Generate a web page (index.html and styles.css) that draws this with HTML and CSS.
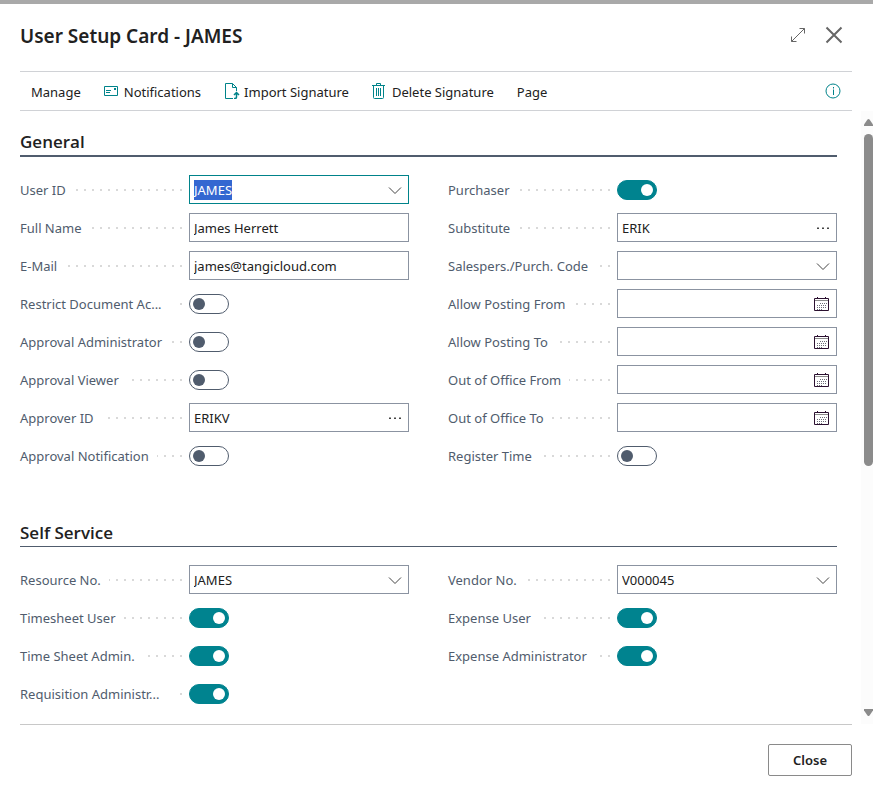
FILE: index.html
```html
<!DOCTYPE html>
<html lang="en">
<head>
<meta charset="utf-8">
<meta name="viewport" content="width=device-width, initial-scale=1">
<title>User Setup Card - JAMES</title>
<link rel="stylesheet" href="styles.css">
</head>
<body>
<svg class="sprite" aria-hidden="true">
  <symbol id="chevron" viewBox="0 0 16 17"><path d="M3 6.500 9 12.500 15 6.500" fill="none" stroke="#444"/></symbol>
  <symbol id="dots" viewBox="0 0 16 17"><path d="M3 8.500h2V10H3zM8 8.500h2V10H8zM13 8.500h2V10h-2z" fill="#444"/></symbol>
  <symbol id="calendar" viewBox="0 0 16 17">
    <path d="M.5 3.500h14v12H.5zM3.500 2v2M11.500 2v2" fill="none" stroke="#2b1030"/>
    <path d="M1 5.500h13" stroke="#8b8b8b"/>
    <path d="M6 8.500h7M3 10.500h10M3 12.500h10M3 14.500h6" fill="none" stroke="#6d6d78" stroke-dasharray="1 1"/>
  </symbol>
</svg>
<div class="dialog" role="dialog" aria-labelledby="title">
  <header class="header">
    <h1 class="title" id="title">User Setup Card - JAMES</h1>
    <div class="window-actions">
      <button class="icon-button" type="button" aria-label="Expand">
        <svg width="16" height="16" viewBox="0 0 16 16" fill="none" stroke="#666"><path d="M1.500 14.500l13-13M9.500 1.500h5v5M1.500 9.500v5h5"/></svg>
      </button>
      <button class="icon-button" type="button" aria-label="Close dialog">
        <svg width="18" height="18" viewBox="0 0 18 18" fill="none" stroke="#666" stroke-width="2"><path d="M1.500 1.500l15 15M16.500 1.500l-15 15"/></svg>
      </button>
    </div>
  </header>
  <nav class="toolbar" aria-label="Actions">
    <button class="action" type="button">Manage</button>
    <button class="action" type="button">
      <svg width="16" height="16" viewBox="0 0 16 16" fill="none" stroke="currentColor"><path d="M.5 3.500h13v9H.5zM2 7.500h5M2 9.500h4"/><path d="M10 5h2v2h-2z" fill="currentColor" stroke="none"/></svg>
      <span>Notifications</span>
    </button>
    <button class="action" type="button">
      <svg width="16" height="16" viewBox="0 0 16 16" fill="none" stroke="currentColor"><path d="M9 15.500H1.500V.5h7l4 4V8M8.500.5v4h4"/><path d="M10 15.500h1q1.500 0 1.500-1.500v-4M10 12l2.500-2.500L15 12" stroke-width="1.500"/></svg>
      <span>Import Signature</span>
    </button>
    <button class="action" type="button">
      <svg width="16" height="16" viewBox="0 0 16 16" fill="none" stroke="currentColor"><path d="M0 2.500h13M4.500 2V.5h4V2M1.500 3v11.500q0 1 1 1h8q1 0 1-1V3M4.500 5v8M6.500 5v8M8.500 5v8"/></svg>
      <span>Delete Signature</span>
    </button>
    <button class="action" type="button">Page</button>
    <button class="icon-button info" type="button" aria-label="Show details">
      <svg width="16" height="16" viewBox="0 0 16 16" fill="none" stroke="currentColor"><circle cx="8" cy="8" r="7"/><path d="M8.500 6.500V12M8.500 4v1.500"/></svg>
    </button>
  </nav>

  <div class="body">
    <main class="content">
      <section class="section">
        <h2 class="section-title section-title--strong">General</h2>
        <div class="columns">
          <div class="column">
            <div class="row"><div class="caption"><label for="user-id">User ID</label></div>
              <div class="field"><input id="user-id" type="text" value="JAMES"><button type="button" aria-label="Choose user"><svg width="16" height="17"><use href="#chevron"/></svg></button></div></div>
            <div class="row"><div class="caption"><label for="full-name">Full Name</label></div>
              <div class="field"><input id="full-name" type="text" value="James Herrett"></div></div>
            <div class="row"><div class="caption"><label for="email">E-Mail</label></div>
              <div class="field"><input id="email" type="email" value="james@tangicloud.com"></div></div>
            <div class="row"><div class="caption caption--clipped"><label for="restrict">Restrict Document Ac...</label></div>
              <input class="switch" id="restrict" type="checkbox" role="switch"></div>
            <div class="row"><div class="caption"><label for="approval-admin">Approval Administrator</label></div>
              <input class="switch" id="approval-admin" type="checkbox" role="switch"></div>
            <div class="row"><div class="caption"><label for="approval-viewer">Approval Viewer</label></div>
              <input class="switch" id="approval-viewer" type="checkbox" role="switch"></div>
            <div class="row"><div class="caption"><label for="approver">Approver ID</label></div>
              <div class="field"><input id="approver" type="text" value="ERIKV"><button type="button" aria-label="Look up approver"><svg width="16" height="17"><use href="#dots"/></svg></button></div></div>
            <div class="row"><div class="caption"><label for="approval-note">Approval Notification</label></div>
              <input class="switch" id="approval-note" type="checkbox" role="switch"></div>
          </div>
          <div class="column">
            <div class="row"><div class="caption"><label for="purchaser">Purchaser</label></div>
              <input class="switch" id="purchaser" type="checkbox" role="switch" checked></div>
            <div class="row"><div class="caption"><label for="substitute">Substitute</label></div>
              <div class="field"><input id="substitute" type="text" value="ERIK"><button type="button" aria-label="Look up substitute"><svg width="16" height="17"><use href="#dots"/></svg></button></div></div>
            <div class="row"><div class="caption"><label for="sales-code">Salespers./Purch. Code</label></div>
              <div class="field"><input id="sales-code" type="text"><button type="button" aria-label="Choose code"><svg width="16" height="17"><use href="#chevron"/></svg></button></div></div>
            <div class="row"><div class="caption"><label for="post-from">Allow Posting From</label></div>
              <div class="field"><input id="post-from" type="text"><button type="button" aria-label="Pick date"><svg width="16" height="17"><use href="#calendar"/></svg></button></div></div>
            <div class="row"><div class="caption"><label for="post-to">Allow Posting To</label></div>
              <div class="field"><input id="post-to" type="text"><button type="button" aria-label="Pick date"><svg width="16" height="17"><use href="#calendar"/></svg></button></div></div>
            <div class="row"><div class="caption"><label for="ooo-from">Out of Office From</label></div>
              <div class="field"><input id="ooo-from" type="text"><button type="button" aria-label="Pick date"><svg width="16" height="17"><use href="#calendar"/></svg></button></div></div>
            <div class="row"><div class="caption"><label for="ooo-to">Out of Office To</label></div>
              <div class="field"><input id="ooo-to" type="text"><button type="button" aria-label="Pick date"><svg width="16" height="17"><use href="#calendar"/></svg></button></div></div>
            <div class="row"><div class="caption"><label for="register-time">Register Time</label></div>
              <input class="switch" id="register-time" type="checkbox" role="switch"></div>
          </div>
        </div>
      </section>

      <section class="section">
        <h2 class="section-title">Self Service</h2>
        <div class="columns">
          <div class="column">
            <div class="row"><div class="caption"><label for="resource">Resource No.</label></div>
              <div class="field"><input id="resource" type="text" value="JAMES"><button type="button" aria-label="Choose resource"><svg width="16" height="17"><use href="#chevron"/></svg></button></div></div>
            <div class="row"><div class="caption"><label for="timesheet-user">Timesheet User</label></div>
              <input class="switch" id="timesheet-user" type="checkbox" role="switch" checked></div>
            <div class="row"><div class="caption"><label for="timesheet-admin">Time Sheet Admin.</label></div>
              <input class="switch" id="timesheet-admin" type="checkbox" role="switch" checked></div>
            <div class="row"><div class="caption caption--clipped"><label for="requisition">Requisition Administr...</label></div>
              <input class="switch" id="requisition" type="checkbox" role="switch" checked></div>
          </div>
          <div class="column">
            <div class="row"><div class="caption"><label for="vendor">Vendor No.</label></div>
              <div class="field"><input id="vendor" type="text" value="V000045"><button type="button" aria-label="Choose vendor"><svg width="16" height="17"><use href="#chevron"/></svg></button></div></div>
            <div class="row"><div class="caption"><label for="expense-user">Expense User</label></div>
              <input class="switch" id="expense-user" type="checkbox" role="switch" checked></div>
            <div class="row"><div class="caption"><label for="expense-admin">Expense Administrator</label></div>
              <input class="switch" id="expense-admin" type="checkbox" role="switch" checked></div>
          </div>
        </div>
      </section>
    </main>
    <div class="rail" aria-hidden="true">
      <svg width="9" height="7" viewBox="0 0 9 7"><path d="M3.500.5q1-1 2 0L9 5.500V7H0V5.500z" fill="#8b8b8b"/></svg>
      <div class="track"><div class="thumb"></div></div>
      <svg width="9" height="7" viewBox="0 0 9 7"><path d="M3.500 6.500q1 1 2 0L9 1.500V0H0v1.500z" fill="#8b8b8b"/></svg>
    </div>
  </div>

  <footer class="footer"><button class="close" type="button">Close</button></footer>
</div>
<script src="script.js"></script>
</body>
</html>
```
FILE: styles.css
```css
* { box-sizing: border-box; }

body {
  margin: 0;
  background: #fff;
  color: #212121;
  font: 13px/20px "Noto Sans", "Open Sans", sans-serif;
}

button, input { margin: 0; font: inherit; color: inherit; }

button {
  padding: 0;
  border: 0;
  background: none;
  cursor: pointer;
}

svg { display: block; flex: none; }

.sprite { position: absolute; width: 0; height: 0; }

.dialog {
  display: flex;
  flex-direction: column;
  min-height: 100vh;
  border-top: 4px solid #a9a9a9;
}

.header {
  display: flex;
  align-items: center;
  justify-content: space-between;
  height: 67px;
  padding: 0 30px 5px 20px;
}

.title { margin: 0; padding-top: 2px; font-size: 19px; font-weight: 600; line-height: 28px; }

.window-actions { display: flex; align-items: center; gap: 19px; }

.toolbar {
  display: flex;
  align-items: center;
  gap: 23px;
  height: 40px;
  margin: 0 21px 0 20px;
  padding: 2px 11px 0;
  border-top: 1px solid #d0d2d6;
  border-bottom: 1px solid #d0d2d6;
}

.action { display: flex; align-items: center; gap: 4px; white-space: nowrap; }
.action svg { margin-bottom: 2px; }
.action svg, .info { color: #00838a; }
.info { margin-left: auto; padding-bottom: 3px; }

.body { display: flex; flex: 1; gap: 24px; }

.content { flex: 1; padding-left: 20px; }

.section { padding-top: 18px; }
.section + .section { padding-top: 49px; }

.section-title {
  margin: 0 0 18px;
  padding-bottom: 1px;
  border-bottom: 1px solid #505c6d;
  font-family: "Open Sans", "Noto Sans", sans-serif;
  font-size: 17px;
  font-weight: 600;
  line-height: 25px;
}

.section-title--strong { border-bottom-width: 2px; }

.columns { display: grid; grid-template-columns: 1fr 1fr; gap: 39px; }

.column { display: flex; flex-direction: column; gap: 8px; }

.row {
  display: grid;
  grid-template-columns: 162fr 220fr;
  align-items: center;
  gap: 7px;
  height: 30px;
}

.caption { display: flex; align-items: center; color: #505c6d; white-space: nowrap; }

/* Dotted leader between the caption and its control */
.caption::after {
  content: "";
  flex: 1;
  height: 2px;
  margin-left: 8px;
  background: repeating-linear-gradient(to left, #d9d9d9 0 2px, transparent 2px 8px);
}

.caption--clipped label { flex: 1; }
.caption--clipped::after { flex: none; width: 2px; }

.field {
  display: flex;
  align-items: center;
  height: 29px;
  margin-bottom: 1px;
  padding: 0 6px 0 4px;
  border: 1px solid #8b93a1;
}

.field:focus-within { border-color: #00838a; }

.field input {
  flex: 1;
  min-width: 0;
  padding: 0;
  border: 0;
  outline: 0;
  background: none;
}

.field input::selection { background: #3367d1; color: #fff; }

.switch {
  width: 40px;
  height: 20px;
  appearance: none;
  border: 1px solid #505c6d;
  border-radius: 10px;
  padding: 3px;
  background: #fff;
}

.switch::before {
  content: "";
  display: block;
  width: 12px;
  height: 12px;
  border-radius: 50%;
  background: #505c6d;
}

.switch:checked { border-color: #00838f; background: #00838f; }
.switch:checked::before { margin-left: 20px; background: #fff; }

.rail {
  display: flex;
  flex-direction: column;
  align-items: flex-end;
  gap: 8px;
  width: 12px;
  padding: 8px 0;
  background: #fcfcfc;
}

.track { flex: 1; width: 9px; }
.thumb { height: 58.5%; border-radius: 5px; background: #8b8b8b; }

.footer {
  display: flex;
  justify-content: flex-end;
  height: 66px;
  margin: 0 21px 0 20px;
  padding-top: 19px;
  border-top: 1px solid #c8c8c8;
}

.close {
  width: 84px;
  height: 32px;
  border: 1px solid #8a8a8a;
  border-radius: 2px;
  font-weight: 600;
}
```
FILE: script.js
```js
document.getElementById("user-id").focus();
document.getElementById("user-id").select();
```
